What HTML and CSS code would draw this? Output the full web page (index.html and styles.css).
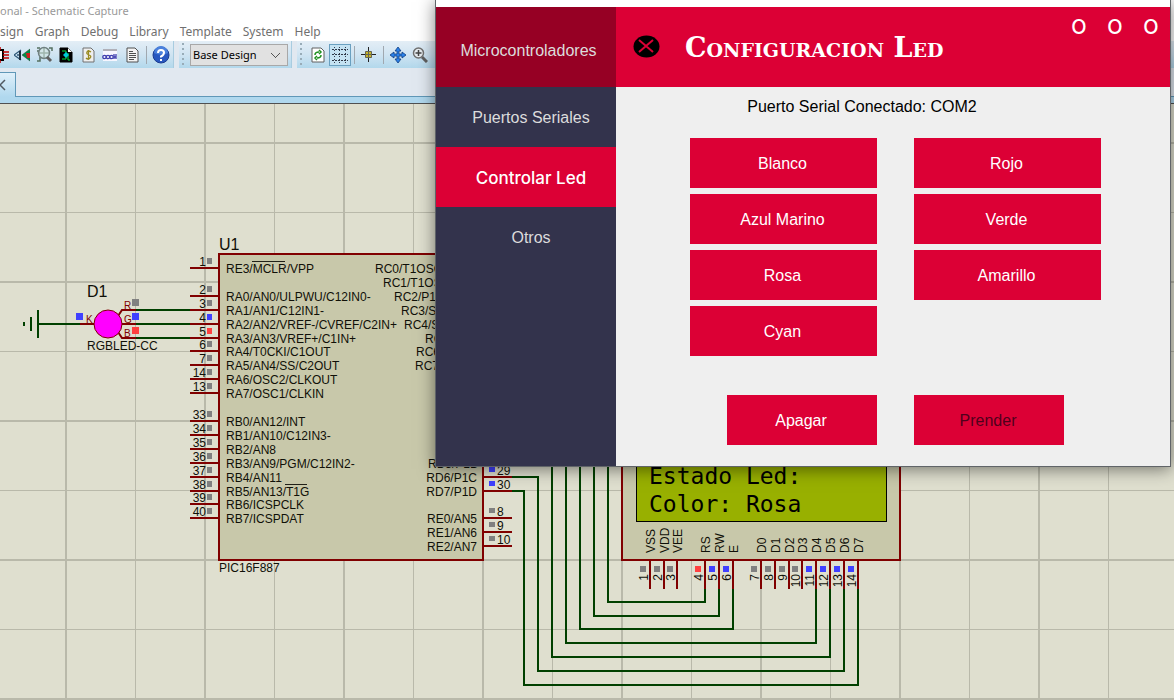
FILE: index.html
```html
<!DOCTYPE html>
<html lang="es">
<head>
<meta charset="utf-8">
<title>Schematic Capture</title>
<link rel="stylesheet" href="styles.css">
</head>
<body>
<div class="app">
  <header class="titlebar">onal - Schematic Capture</header>
  <nav class="menubar">
    <button>sign</button><button>Graph</button><button>Debug</button><button>Library</button><button>Template</button><button>System</button><button>Help</button>
  </nav>
  <div class="toolbar">
    <div class="group first">
      <button class="tool" aria-label="Component"><svg width="18" height="18"><path d="M2 4h10v10H2z" fill="#fff" stroke="#000" stroke-width="2"/><path d="M5 1v3M9 1v3M5 14v3M9 14v3M12 6h6M12 9h6M12 12h6" stroke="#c00000" stroke-width="1.5"/></svg></button>
      <button class="tool" aria-label="Package"><svg width="16" height="14"><path d="M7 2L0 7l7 5M3 7h4" fill="none" stroke="#305878" stroke-width="1.300"/><path d="M6 3v9" stroke="#203040" stroke-width="2"/><path d="M16 1v12L8 7z" fill="#009048" stroke="#204030" stroke-width=".5"/><path d="M12 5h4v5h-3z" fill="#d02020"/></svg></button>
      <button class="tool" aria-label="Analysis"><svg width="17" height="17"><path d="M1 2h3M1 5h3M13 2h3v3M1 15h3v-4M3 7h11M8 1v12" fill="none" stroke="#557060" stroke-width="1.500"/><circle cx="8" cy="7" r="5.500" fill="#d0e4e0" fill-opacity=".6" stroke="#708080" stroke-width="1.500"/><path d="M11 11l4 4" stroke="#606060" stroke-width="3"/></svg></button>
      <button class="tool" aria-label="PCB layout"><svg width="14" height="16"><path d="M1 1h8l4 4v10H1z" fill="#000" stroke="#000"/><path d="M9 1v4h4" fill="#fff"/><path d="M3 4h4v8H3M11 13H9V6" stroke="#00e040" fill="none"/><path d="M4 8l3-3 3 3-3 3z" fill="#00c8d8"/></svg></button>
      <button class="tool" aria-label="Bill of materials"><svg width="13" height="16"><path d="M1 1h8l3 3v11H1z" fill="#eee" stroke="#707070"/><path d="M9 5Q6 3 5 5t2 3 1 3T4 11M6.500 3v10" fill="none" stroke="#9a8a20" stroke-width="1.300"/></svg></button>
      <button class="tool" aria-label="Source code"><svg width="16" height="16"><path d="M1 2h14v12H1z" fill="#f6f6ff"/><path d="M1 2h14v2H1z" fill="#b0b0b8"/><g fill="none" stroke="#4040b0" stroke-width="1.300"><circle cx="2.500" cy="10" r="1.700"/><circle cx="6" cy="10" r="1.700"/><circle cx="9.500" cy="10" r="1.700"/><path d="M12 7v5M14 7v5M12 10h2"/></g></svg></button>
      <button class="tool" aria-label="Notes"><svg width="13" height="16"><path d="M1 1h8l3 3v11H1z" fill="#f4f4f4" stroke="#505050"/><path d="M3 4.500h4M3 6.500h7M3 8.500h7M3 10.500h7M3 12.500h5" stroke="#505050"/></svg></button>
      <span class="sep"></span>
      <button class="tool" aria-label="Help"><svg width="18" height="18"><circle cx="9" cy="9" r="8" fill="#2858c0" stroke="#1a3c90"/><path d="M2 7a7 7 0 0 1 14 0q-7 3-14 0z" fill="#4a80dc"/><path d="M6 7q0-3 3-3t3 2.500-3 4v1M9 13v2" fill="none" stroke="#fff" stroke-width="2"/></svg></button>
    </div>
    <div class="group design">
      <span class="grip"></span>
      <select aria-label="Design variant"><option>Base Design</option></select>
    </div>
    <div class="group rest">
      <span class="grip"></span>
      <button class="tool" aria-label="Redraw"><svg width="14" height="16"><path d="M1 1h9l3 3v11H1z" fill="#fff" stroke="#606060"/><path d="M4 8q0-3 4-3M8 3l2 2-2 2M10 8q0 3-4 3M6 9l-2 2 2 2" fill="none" stroke="#209020" stroke-width="1.500"/></svg></button>
      <button class="tool active" aria-label="Grid"><svg width="16" height="16"><path d="M0 2.500h16M0 7.500h16M0 13.500h16" stroke="#303848" stroke-dasharray="2 1"/><path d="M2.500 0v16M7.500 0v16M13.500 0v16" stroke="#303848" stroke-dasharray="1 2"/></svg></button>
      <span class="sep"></span>
      <button class="tool" aria-label="Origin"><svg width="16" height="16"><path d="M0 7.500h15M7.500 0v15" stroke="#222"/><path d="M4.500 4.500h6v6h-6z" fill="#c8b428" stroke="#665"/><path d="M5 7.500h5M7.500 5v5" stroke="#665"/></svg></button>
      <span class="sep"></span>
      <button class="tool" aria-label="Pan"><svg width="16" height="16"><path d="M8 0l3 4H9v3h3V5l4 3-4 3V9H9v3h2l-3 4-3-4h2V9H4v2L0 8l4-3v2h3V4H5z" fill="#2a80e8" stroke="#103c80" stroke-width=".8"/></svg></button>
      <button class="tool" aria-label="Zoom in"><svg width="16" height="16"><path d="M10 10l5 5" stroke="#606060" stroke-width="3"/><circle cx="6.500" cy="6" r="5" fill="#e8eef2" stroke="#707070" stroke-width="1.500"/><path d="M3.500 6h6M6.500 3v6" stroke="#444" stroke-width="1.500"/></svg></button>
    </div>
  </div>
  <div class="tabs"><button class="tab" aria-label="Close tab"><svg width="10" height="12"><path d="M-5 1L5 11M5 1L-5 11" stroke="#505860" stroke-width="1.500"/></svg></button></div>

  <main class="sheet">
    <svg class="schematic" role="img" aria-label="PIC16F887">
      <g id="drawing" transform="translate(0 -104)">
        <g id="grid"></g>
        <g class="wire">
          <path d="M38 310v28M38 324h42M136 310h55M136 324h55M136 338h55"/>
          <path d="M31 317v14M24 322v4"/>
          <path d="M512 491h12v194h334v-97M512 477h26v194h306v-83M552 460v197h278v-69M566 460v183h250v-55M580 460v169h153v-41M594 460v156h125v-28M608 460v142h97v-14"/>
        </g>
        <g class="part">
          <rect x="219" y="254" width="264" height="306"/>
          <rect x="622" y="400" width="278" height="160"/>
          <path d="M80 324h15M136 310h-14l-4 6M136 324h-14M136 338h-14l-4-6"/>
        </g>
        <circle cx="108" cy="324" r="14" class="led"/>
        <rect x="636.5" y="440.5" width="250" height="81" class="lcd"/>
        <text class="lcdtext" x="649" y="484">Estado Led:</text>
        <text class="lcdtext" x="649" y="512">Color: Rosa</text>
        <text class="name" x="219" y="250">U1</text>
        <text class="name" x="87" y="297">D1</text>
        <text x="219" y="572">PIC16F887</text>
        <text x="87" y="350">RGBLED-CC</text>
        <g class="tag"><text x="86" y="323">K</text><text x="124" y="309">R</text><text x="124" y="323">G</text><text x="124" y="337">B</text></g>
        <path class="bar" d="M252 261.500h33M285 484.500h22"/>
        <g><rect x="76" y="313" width="7" height="7" class="b"/><rect x="132" y="299" width="7" height="7" class="g"/><rect x="132" y="313" width="7" height="7" class="b"/><rect x="132" y="327" width="7" height="7" class="r"/></g>
        <g id="pins"></g>
      </g>
    </svg>
  </main>

  <section class="dialog">
    <aside class="side">
      <button class="brand">Microcontroladores</button>
      <button>Puertos Seriales</button>
      <button class="current">Controlar Led</button>
      <button>Otros</button>
    </aside>
    <div class="panel">
      <header class="banner">
        <button class="close" aria-label="Cerrar"><svg width="27" height="23"><ellipse cx="13.500" cy="11.500" rx="13" ry="11" fill="#000"/><path d="M6 5l14 12M20 5L6 17" stroke="#dc0035" stroke-width="2"/></svg></button>
        <h1>Configuracion Led</h1>
        <div class="controls"><button>O</button><button>O</button><button>O</button></div>
      </header>
      <p class="status">Puerto Serial Conectado: COM2</p>
      <div class="colors">
        <button>Blanco</button><button>Rojo</button>
        <button>Azul Marino</button><button>Verde</button>
        <button>Rosa</button><button>Amarillo</button>
        <button>Cyan</button>
      </div>
      <div class="power"><button>Apagar</button><button disabled>Prender</button></div>
    </div>
  </section>
</div>
<script src="schematic.js"></script>
</body>
</html>
```
FILE: styles.css
```css
* { box-sizing: border-box; }
body { margin: 0; font: 12px "Noto Sans", sans-serif; background: #fff; }
button { border: 0; padding: 0; background: none; font: inherit; color: inherit; }
.app { position: relative; display: flex; flex-direction: column; height: 100vh; overflow: hidden; }
.titlebar { height: 22px; font-size: 11px; line-height: 22px; color: #999; }
.menubar { display: flex; gap: 11px; height: 19px; line-height: 19px; color: #707070; }
.toolbar { display: flex; gap: 5px; height: 27px; background: #e1e8f0; overflow: hidden; }
.group { display: flex; align-items: center; background: linear-gradient(#e4eef6, #d0e4f2 50%, #b2d8ec); flex: none; }
.first { margin-left: -11px; padding-right: 1px; border-right: 1px solid #a8cce0; }
.design { gap: 3px; padding: 0 3px; border-right: 1px solid #a8cce0; }
.rest { flex: 1; padding-left: 3px; }
.tool { display: grid; place-items: center; width: 22px; height: 22px; flex: none; }
.tool.active { background: #c4e2f2; border: 1px solid #6aa0c0; }
.sep { width: 7px; height: 18px; flex: none; background: linear-gradient(#a0a8b0, #a0a8b0) 3px 0 / 1px 100% no-repeat; }
.grip { width: 4px; height: 24px; margin-right: 3px; flex: none; background: repeating-linear-gradient(#98acb8 0 2px, transparent 2px 5px) 0 0 / 2px 100% no-repeat; }
.design .grip { margin-right: 1px; }
select { width: 98px; height: 22px; padding: 0 8px 0 2px; border: 1px solid #a8a8a8; appearance: none; color: #000; font: 11px "Noto Sans", sans-serif;
  background: linear-gradient(45deg, transparent 43%, #555 43% 57%, transparent 57%) 80px 8px / 5px 5px no-repeat, linear-gradient(-45deg, transparent 43%, #555 43% 57%, transparent 57%) 85px 8px / 5px 5px no-repeat, #e1e1e1;
  background: linear-gradient(-135deg, transparent 43%, #555 43% 57%, transparent 57%) 84px 8px / 5px 5px no-repeat, #e1e1e1;
  background: linear-gradient(45deg, transparent 43%, #555 43% 57%, transparent 57%) 80px 8px / 5px 5px no-repeat, linear-gradient(135deg, transparent 43%, #555 43% 57%, transparent 57%) 84px 8px / 5px 5px no-repeat, #e1e1e1; }
.tabs { height: 36px; padding-top: 4px; background: linear-gradient(#6098b8, #6098b8) 0 28px / 100% 1px no-repeat, linear-gradient(#b0d8ee, #b0d8ee) 0 29px / 100% 6px no-repeat, #e1e8f0; border-bottom: 1px solid #505050; }
.tab { display: grid; place-items: center start; width: 16px; height: 25px; border: 1px solid #6098b8; border-left: 0; border-bottom: 0; background: linear-gradient(#e0f0fa, #b0d8ee); }
.sheet { flex: 1; background: #dfdfcf; overflow: hidden; }
.schematic { display: block; width: 100%; height: 100%; }
.schematic text { font: 12px "Liberation Sans", Arial, sans-serif; fill: #101008; }
.schematic .name { font-size: 16px; }
.schematic .tag text { font-size: 10px; fill: #800000; }
.schematic .lcdtext { font: 23px "DejaVu Sans Mono", monospace; fill: #000; }
.grid-line { stroke: #b9b9aa; }
.grid-line.major { stroke-width: 2; }
.wire { fill: none; stroke: #004000; stroke-width: 2; }
.part { fill: none; stroke: #800000; stroke-width: 2; }
.part rect { fill: #c8c8aa; }
.led { fill: #f0f; stroke: #800000; }
.lcd { fill: #98b000; stroke: #000; }
.bar { stroke: #202018; }
.g { fill: #808080; }
.b { fill: #4040ff; }
.r { fill: #ff4040; }
.dialog { position: absolute; top: 0; left: 435px; right: 3px; display: flex; padding-top: 7px; background: #fff; border: 1px solid #606468; border-top: 0; box-shadow: 0 2px 16px rgba(0, 0, 0, .5); font: 16px "Liberation Sans", Arial, sans-serif; }
.side { display: flex; flex-direction: column; width: 180px; background: #33334c; color: #dcdcdc; }
.side button { height: 60px; padding: 2px 0 0 10px; }
.side .brand { height: 80px; padding: 7px 0 0 5px; background: #960024; }
.side .current { background: #dc0035; color: #fff; font: 500 17px Inter, sans-serif; }
.panel { flex: 1; background: #efefef; padding-bottom: 21px; }
.banner { display: flex; align-items: center; height: 80px; padding: 0 10px 0 17px; background: #dc0035; color: #fff; }
.close { padding-top: 3px; }
h1 { flex: 1; margin: 0 0 0 25px; font: bold 27px "DejaVu Serif", serif; font-variant: small-caps; white-space: nowrap; }
.controls { display: flex; align-self: flex-start; gap: 18px; margin-top: 9px; font: 500 20px/22px Inter, sans-serif; }
.controls button { width: 18px; }
.status { margin: 0; padding: 10px 62px 0 0; height: 51px; line-height: 20px; text-align: center; color: #000; }
.colors { display: grid; grid-template-columns: 1fr 1fr; grid-auto-rows: 50px; gap: 6px 37px; padding: 0 69px 0 74px; }
.colors button, .power button { padding: 2px 2px 0 0; background: #dc0035; color: #fff; }
.power { display: flex; justify-content: flex-end; gap: 37px; margin-top: 39px; padding-right: 106px; }
.power button { width: 150px; height: 50px; }
.power button:disabled { color: #50001c; }
```
FILE: schematic.js
```js
const NS = 'http://www.w3.org/2000/svg';
const grid = document.getElementById('grid');
const pins = document.getElementById('pins');

function add(parent, tag, attrs, text) {
  const el = document.createElementNS(NS, tag);
  for (const k in attrs) el.setAttribute(k, attrs[k]);
  if (text) el.textContent = text;
  parent.appendChild(el);
}

function gridLine(at, major, vertical) {
  const p = major ? Math.round(at) : Math.floor(at) + 0.5;
  const d = vertical ? `M${p} 0V4000` : `M0 ${p}H6000`;
  add(grid, 'path', { class: major ? 'grid-line major' : 'grid-line', d });
}
for (let i = 0; i < 60; i++) {
  gridLine(66 + i * 69.5, i % 2 === 0, true);
  gridLine(143 + i * 69.5, i % 2 === 0, false);
}

const left = [
  [1, 268, 'RE3/MCLR/VPP'], [2, 296, 'RA0/AN0/ULPWU/C12IN0-'], [3, 310, 'RA1/AN1/C12IN1-'],
  [4, 324, 'RA2/AN2/VREF-/CVREF/C2IN+', 'b'], [5, 338, 'RA3/AN3/VREF+/C1IN+', 'r'],
  [6, 351, 'RA4/T0CKI/C1OUT'], [7, 365, 'RA5/AN4/SS/C2OUT'], [14, 379, 'RA6/OSC2/CLKOUT'],
  [13, 393, 'RA7/OSC1/CLKIN'], [33, 421, 'RB0/AN12/INT'], [34, 435, 'RB1/AN10/C12IN3-'],
  [35, 449, 'RB2/AN8'], [36, 463, 'RB3/AN9/PGM/C12IN2-'], [37, 477, 'RB4/AN11'],
  [38, 491, 'RB5/AN13/T1G'], [39, 504, 'RB6/ICSPCLK'], [40, 518, 'RB7/ICSPDAT']
];
for (const [n, y, label, state] of left) {
  add(pins, 'path', { class: 'part', d: `M190 ${y}h29` });
  add(pins, 'text', { x: 206, y: y - 2, 'text-anchor': 'end' }, n);
  add(pins, 'rect', { class: state || 'g', x: 207, y: y - 10, width: 5, height: 6 });
  add(pins, 'text', { x: 226, y: y + 5 }, label);
}

const portC = [
  [375, 273, 'RC0/T1OSO'], [383, 287, 'RC1/T1OSI'], [394, 301, 'RC2/P1A'], [401, 315, 'RC3/SCK'],
  [404, 329, 'RC4/SDI'], [425, 343, 'RC5'], [416, 356, 'RC6/TX'], [415, 370, 'RC7/RX'], [428, 468, 'RD5/P1B']
];
for (const [x, y, label] of portC) add(pins, 'text', { x, y }, label);

const right = [[29, 477, 'RD6/P1C', 'b'], [30, 491, 'RD7/P1D', 'b'], [8, 518, 'RE0/AN5'], [9, 532, 'RE1/AN6'], [10, 546, 'RE2/AN7']];
for (const [n, y, label, state] of right) {
  add(pins, 'path', { class: 'part', d: `M483 ${y}h29` });
  add(pins, 'text', { x: 497, y: y - 2 }, n);
  add(pins, 'rect', { class: state || 'g', x: 489, y: y - 10, width: 6, height: 5 });
  add(pins, 'text', { x: 477, y: y + 5, 'text-anchor': 'end' }, label);
}

const display = [
  [650, 'VSS'], [664, 'VDD'], [677, 'VEE'], [705, 'RS', 'r'], [719, 'RW', 'b'], [733, 'E', 'b'],
  [761, 'D0'], [775, 'D1'], [789, 'D2'], [802, 'D3'], [816, 'D4', 'b'], [830, 'D5', 'b'], [844, 'D6', 'b'], [858, 'D7', 'b']
];
display.forEach(([x, label, state], i) => {
  add(pins, 'path', { class: 'part', d: `M${x} 560v29` });
  add(pins, 'text', { transform: `translate(${x + 5} 553) rotate(-90)` }, label);
  add(pins, 'text', { transform: `translate(${x - 2} 574) rotate(-90)`, 'text-anchor': 'end' }, i + 1);
  add(pins, 'rect', { class: state || 'g', x: x - 10, y: 566, width: 6, height: 6 });
});
```
